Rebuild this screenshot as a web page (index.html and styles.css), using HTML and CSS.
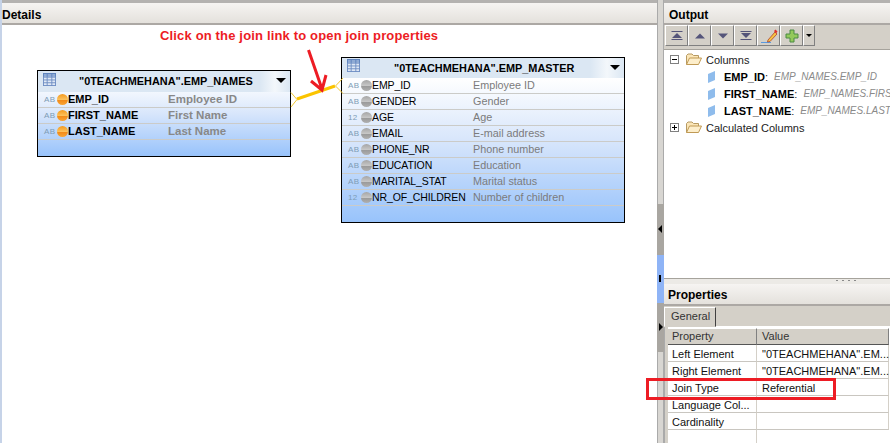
FILE: index.html
```html
<!DOCTYPE html>
<html lang="en">
<head>
<meta charset="utf-8">
<title>Join properties</title>
<link rel="stylesheet" href="styles.css">
</head>
<body>
<div class="app">
  <section class="details">
    <header class="view-head details-head">Details</header>
    <div class="canvas">
      <div class="note">Click on the join link to open join properties</div>

      <div class="node node-names">
        <div class="node-head">
          <svg class="tbl" width="13" height="13" viewBox="0 0 14 14"><rect x=".5" y=".5" width="13" height="13" fill="#dfe8f5" stroke="#6f8fc4"/><path d="M0 4.5H14M0 7.5H14M0 10.5H14M4.5 0V14M9.5 0V14" stroke="#6f8fc4" fill="none"/><rect x="0" y="0" width="14" height="4" fill="#4f78b8" opacity=".55"/></svg>
          <span class="node-title">"0TEACHMEHANA".EMP_NAMES</span>
          <i class="caret"></i>
        </div>
        <div class="row key"><span class="type">AB</span><i class="dot dot-o"></i><span class="name">EMP_ID</span><span class="desc">Employee ID</span></div>
        <div class="row key"><span class="type">AB</span><i class="dot dot-o"></i><span class="name">FIRST_NAME</span><span class="desc">First Name</span></div>
        <div class="row key"><span class="type">AB</span><i class="dot dot-o"></i><span class="name">LAST_NAME</span><span class="desc">Last Name</span></div>
      </div>

      <div class="node node-master">
        <div class="node-head">
          <svg class="tbl" width="13" height="13" viewBox="0 0 14 14"><rect x=".5" y=".5" width="13" height="13" fill="#dfe8f5" stroke="#6f8fc4"/><path d="M0 4.5H14M0 7.5H14M0 10.5H14M4.5 0V14M9.5 0V14" stroke="#6f8fc4" fill="none"/><rect x="0" y="0" width="14" height="4" fill="#4f78b8" opacity=".55"/></svg>
          <span class="node-title">"0TEACHMEHANA".EMP_MASTER</span>
          <i class="caret"></i>
        </div>
        <div class="row"><span class="type">AB</span><i class="dot"></i><span class="name">EMP_ID</span><span class="desc">Employee ID</span></div>
        <div class="row"><span class="type">AB</span><i class="dot"></i><span class="name">GENDER</span><span class="desc">Gender</span></div>
        <div class="row"><span class="type">12</span><i class="dot"></i><span class="name">AGE</span><span class="desc">Age</span></div>
        <div class="row"><span class="type">AB</span><i class="dot"></i><span class="name">EMAIL</span><span class="desc">E-mail address</span></div>
        <div class="row"><span class="type">AB</span><i class="dot"></i><span class="name">PHONE_NR</span><span class="desc">Phone number</span></div>
        <div class="row"><span class="type">AB</span><i class="dot"></i><span class="name">EDUCATION</span><span class="desc">Education</span></div>
        <div class="row"><span class="type">AB</span><i class="dot"></i><span class="name">MARITAL_STAT</span><span class="desc">Marital status</span></div>
        <div class="row"><span class="type">12</span><i class="dot"></i><span class="name">NR_OF_CHILDREN</span><span class="desc">Number of children</span></div>
      </div>

      <svg class="links" width="657" height="418" viewBox="0 25 657 418">
        <path d="M291 92.500L297 99.500L291 107M343 78L335.500 86L343 93.500" fill="none" stroke="#f2c832" stroke-width="1"/>
        <path d="M297 99L335 86" fill="none" stroke="#fbc400" stroke-width="3"/>
        <path d="M308.500 50L322 89M311 81L322 90L326 75" fill="none" stroke="#ed1c24" stroke-width="3"/>
      </svg>
    </div>
  </section>

  <div class="splitter">
    <i class="sp-top"></i>
    <i class="sp-mid"><b class="left-tip"></b></i>
    <i class="sp-blue"><b class="mark"></b></i>
    <i class="sp-low"><b class="right-tip"></b></i>
    <i class="sp-end"></i>
  </div>

  <aside class="side">
    <section class="output">
      <header class="view-head output-head">Output</header>
      <div class="toolbar">
        <button class="tb"><svg width="16" height="12" viewBox="0 0 16 12"><path d="M8 3L13 8H3Z" fill="#55557a"/><path d="M2.500 1.500H13.500M2.500 9.500H13.500" stroke="#55557a" fill="none"/></svg></button>
        <button class="tb"><svg width="16" height="12" viewBox="0 0 16 12"><path d="M8 3.500L13 8.500H3Z" fill="#55557a"/></svg></button>
        <button class="tb"><svg width="16" height="12" viewBox="0 0 16 12"><path d="M8 8.500L13 3.500H3Z" fill="#55557a"/></svg></button>
        <button class="tb"><svg width="16" height="12" viewBox="0 0 16 12"><path d="M8 8L13 3H3Z" fill="#55557a"/><path d="M2.500 1.500H13.500M2.500 9.500H13.500" stroke="#55557a" fill="none"/></svg></button>
        <button class="tb"><svg width="18" height="16" viewBox="0 0 18 16"><path d="M1 14.500H11" stroke="#5a9ae0" fill="none"/><path d="M8 12L15 4L17 6L10 13.500L7.500 14Z" fill="#f5c542" stroke="#b3402a" stroke-width=".8"/><path d="M14 3L15.500 1.500L17.500 3.500L16 5.500Z" fill="#e0342c"/></svg></button>
        <button class="tb"><svg width="14" height="14" viewBox="0 0 14 14"><path d="M5 1H9V5H13V9H9V13H5V9H1V5H5Z" fill="#93c95b" stroke="#4b8a45"/></svg></button>
        <button class="tb tb-drop"><i class="tb-caret"></i></button>
      </div>
      <div class="tree">
        <div class="tree-row"><i class="box box-minus"></i><svg class="folder" width="16" height="13" viewBox="0 0 16 13"><path d="M.5 11.500V2.500L2 1H6L7.500 2.500H12.500V5" fill="#fbe6b8" stroke="#b79a62"/><path d="M.5 11.500L3.500 5H15.500L12.500 11.500Z" fill="#fdeecb" stroke="#c09a55"/></svg><span>Columns</span></div>
        <div class="tree-row leaf"><svg class="col" width="8" height="12" viewBox="0 0 8 12"><path d="M0 3L7 0V9L0 12Z" fill="#8fbcec"/></svg><b>EMP_ID</b>:&nbsp;<em>EMP_NAMES.EMP_ID</em></div>
        <div class="tree-row leaf"><svg class="col" width="8" height="12" viewBox="0 0 8 12"><path d="M0 3L7 0V9L0 12Z" fill="#8fbcec"/></svg><b>FIRST_NAME</b>:&nbsp;<em>EMP_NAMES.FIRST_NAME</em></div>
        <div class="tree-row leaf"><svg class="col" width="8" height="12" viewBox="0 0 8 12"><path d="M0 3L7 0V9L0 12Z" fill="#8fbcec"/></svg><b>LAST_NAME</b>:&nbsp;<em>EMP_NAMES.LAST_NAME</em></div>
        <div class="tree-row"><i class="box box-plus"></i><svg class="folder" width="16" height="13" viewBox="0 0 16 13"><path d="M.5 11.500V2.500L2 1H6L7.500 2.500H12.500V5" fill="#fbe6b8" stroke="#b79a62"/><path d="M.5 11.500L3.500 5H15.500L12.500 11.500Z" fill="#fdeecb" stroke="#c09a55"/></svg><span>Calculated Columns</span></div>
      </div>
    </section>

    <div class="sash"><span class="grip"></span></div>

    <section class="props">
      <header class="view-head props-head">Properties</header>
      <div class="tabs"><span class="tab">General</span></div>
      <div class="table">
        <div class="cell th c1">Property</div><div class="cell th c2">Value</div>
        <div class="cell c1">Left Element</div><div class="cell c2">"0TEACHMEHANA".EM...</div>
        <div class="cell c1">Right Element</div><div class="cell c2">"0TEACHMEHANA".EM...</div>
        <div class="cell c1">Join Type</div><div class="cell c2">Referential</div>
        <div class="cell c1">Language Col...</div><div class="cell c2"></div>
        <div class="cell c1">Cardinality</div><div class="cell c2"></div>
      </div>
      <div class="tail"></div>
    </section>
  </aside>
  <div class="redbox"></div>
</div>
</body>
</html>
```

FILE: styles.css
```css
* { box-sizing: border-box; }
html, body { margin: 0; height: 100%; }
body {
  overflow: hidden;
  background: #fff;
  font-family: "Liberation Sans", Arial, sans-serif;
  font-size: 11px;
  color: #000;
}
.app { position: relative; display: flex; width: 890px; height: 443px; }

.view-head {
  height: 25px;
  padding: 4px 0 0 2px;
  border-top: 3px solid #b4b2b0;
  border-bottom: 2px solid #aca8a4;
  background: linear-gradient(#f6f4f2, #e4e1dc);
  font-weight: 700;
  line-height: 16px;
  font-size: 12px;
}

.details { width: 657px; display: flex; flex-direction: column; border-left: 2px solid #c6d3e8; }
.details-head { padding-left: 0; }
.output-head { padding-left: 5px; }
.canvas { position: relative; flex: 1; background: #fff; }

.note {
  position: absolute;
  left: 158px;
  top: 3px;
  color: #ed1c24;
  font-weight: 700;
  font-size: 13px;
  line-height: 15px;
  letter-spacing: .16px;
  white-space: nowrap;
}

.node {
  position: absolute;
  border: 1px solid #000;
  background: linear-gradient(#fff 12%, #d8e6fb 50%, #98c3fb 100%);
}
.node-names { left: 35px; top: 45px; width: 254px; height: 87px; }
.node-master { left: 339px; top: 32px; width: 284px; height: 166px; }
.node-head {
  display: flex;
  align-items: flex-start;
  height: 20px;
  padding: 1px 0 0 5px;
  background: linear-gradient(90deg, #dbe7f3 0, #dbe7f3 88%, #f3f7fb 94%, #dbe7f3 100%);
  position: relative;
}
.node-names .node-head { height: 21px; padding-top: 2px; }
.node-title { position: absolute; left: 41px; top: 0; font-weight: 700; font-size: 10.900px; line-height: 20px; white-space: nowrap; }
.node-master .node-title { left: 52px; }
.tbl { display: block; }
.caret {
  position: absolute;
  right: 4px;
  top: 7px;
  border-style: solid;
  border-width: 5px 5px 0;
  border-color: #000 transparent transparent;
}
.row {
  display: flex;
  align-items: center;
  height: 16px;
  padding-left: 6px;
  border-bottom: 1px solid #cbcbc8;
  line-height: 15px;
}
.type { width: 13px; font-size: 8px; color: #7d9cb5; letter-spacing: .4px; }
.dot {
  width: 11px;
  height: 11px;
  border-radius: 50%;
  background: linear-gradient(#a5a5a5 0, #c6c6c6 50%, #9a9a9a 56%, #b0b0b0 100%);
}
.dot-o { background: linear-gradient(#f49a1e 0, #fcc05a 50%, #f28a18 56%, #f9a535 100%); }
.name { width: 101px; font-size: 10.500px; letter-spacing: -.1px; white-space: nowrap; }
.key .name { font-weight: 700; font-size: 11px; letter-spacing: 0; width: 100px; }
.desc { color: #7b7b7b; white-space: nowrap; font-size: 10.800px; }
.key .desc { font-weight: 700; color: #888; font-size: 11.500px; }
.links { position: absolute; left: -2px; top: 0; pointer-events: none; }

.splitter { width: 7px; display: flex; flex-direction: column; }
.splitter i { display: block; position: relative; }
.sp-top { height: 204px; background: #d8d6d2; border-left: 1px solid #aaa; border-right: 1px solid #aaa; }
.sp-mid { height: 51px; background: #a9a6a1; }
.sp-blue { height: 48px; background: #8fb4f6; }
.sp-low { height: 49px; background: #a9a6a1; }
.sp-end { flex: 1; background: #d8d6d2; border-left: 1px solid #aaa; border-right: 1px solid #aaa; }
.left-tip {
  position: absolute; left: 1px; top: 21px;
  border-style: solid; border-width: 4px 4px 4px 0;
  border-color: transparent #000 transparent transparent;
}
.right-tip {
  position: absolute; left: 2px; top: 20px;
  border-style: solid; border-width: 4px 0 4px 4px;
  border-color: transparent transparent transparent #000;
}
.mark { position: absolute; left: 2px; top: 20px; width: 2px; height: 7px; background: #000; }

.side { width: 226px; display: flex; flex-direction: column; overflow: hidden; }
.output { height: 278px; display: flex; flex-direction: column; }
.toolbar {
  display: flex;
  height: 25px;
  padding: 0 0 3px 1px;
  background: #d4d0c8;
  border-bottom: 1px solid #a6a39c;
}
.tb {
  width: 23px;
  height: 21px;
  padding: 0;
  display: flex;
  align-items: center;
  justify-content: center;
  background: #d4d0c8;
  border: 1px solid;
  border-color: #fff #808080 #808080 #fff;
}
.tb-drop { width: 12px; }
.tb-caret { border-style: solid; border-width: 3px 3px 0; border-color: #000 transparent transparent; }
.tree { flex: 1; padding-top: 1px; background: #fff; }
.tree-row {
  display: flex;
  align-items: center;
  height: 17px;
  padding-left: 6px;
  white-space: nowrap;
  color: #222;
}
.box { position: relative; width: 9px; height: 9px; border: 1px solid #808080; background: #fff; }
.box::before { content: ""; position: absolute; left: 1px; top: 3px; width: 5px; height: 1px; background: #000; }
.box-plus::after { content: ""; position: absolute; left: 3px; top: 1px; width: 1px; height: 5px; background: #000; }
.folder { margin: 0 4px 0 7px; flex: none; }
.leaf { padding-left: 44px; }
.col { margin-right: 8px; flex: none; }
.leaf b { color: #000; }
.leaf em { color: #8a8a8a; font-size: 10px; margin-left: 3px; }

.sash { position: relative; height: 6px; background: #eceae6; border-top: 1px solid #a6a39c; }
.grip { position: absolute; right: 32px; top: 1px; width: 22px; height: 1px; background: repeating-linear-gradient(90deg, #8a8a8a 0 2px, transparent 2px 6px); }

.props { flex: 1; display: flex; flex-direction: column; background: #fff; position: relative; }
.props-head { height: 22px; padding: 3px 0 0 4px; border-top: 0; }
.tabs { height: 21px; padding-top: 1px; background: #d4d0c8; border-bottom: 1px solid #fff; display: flex; }
.tab {
  width: 52px;
  height: 20px;
  padding: 1px 0 0 6px;
  border: 1px solid;
  border-color: #fff #404040 #d4d0c8 #fff;
  background: #d4d0c8;
  line-height: 14px;
  color: #333;
}
.table { display: grid; grid-template-columns: 90px 132px; margin-left: 3px; padding-top: 1px; background: #fff; }
.cell {
  height: 17px;
  padding-left: 5px;
  border-bottom: 1px solid #c9c6c0;
  border-right: 1px solid #d4d0c8;
  line-height: 18px;
  white-space: nowrap;
  color: #111;
}
.th {
  height: 17px;
  padding-left: 5px;
  background: #d4d0c8;
  border-top: 1px solid #fff;
  border-right: 1px solid #808080;
  border-bottom: 1px solid #555;
  color: #333;
  line-height: 14px;
}
.tail { flex: 1; margin-left: 3px; width: 90px; border-right: 1px solid #d4d0c8; }
.props::before { content: ""; position: absolute; left: 0; top: 43px; bottom: 0; width: 3px; background: #d4d0c8; border-left: 1px solid #aaa; }

.redbox {
  position: absolute;
  left: 646px;
  top: 378px;
  width: 190px;
  height: 22px;
  border: 3px solid #ed1c24;
  pointer-events: none;
}
```
